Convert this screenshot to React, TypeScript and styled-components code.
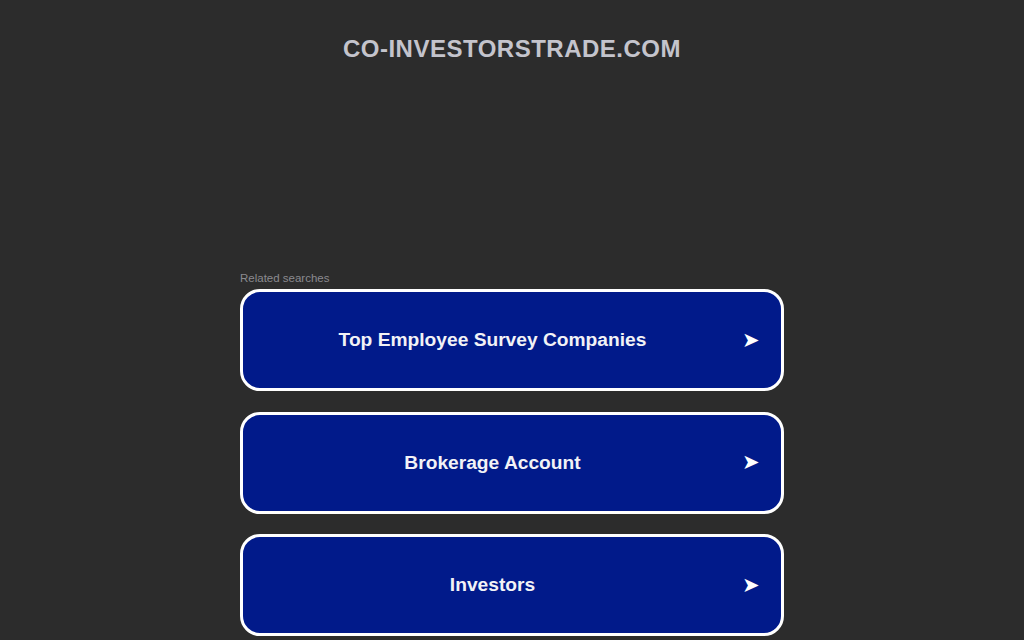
import React from "react";
import styled, { createGlobalStyle } from "styled-components";

const Global = createGlobalStyle`
  html, body { margin: 0; padding: 0; background: #2c2c2c; }
  body { font-family: "Liberation Sans", Arial, sans-serif; }
`;

const Page = styled.div`
  display: flex;
  flex-direction: column;
  align-items: center;
  min-height: 640px;
`;

const Domain = styled.h1`
  margin: 34px 0 0;
  font-size: 24px;
  font-weight: 700;
  line-height: 29px;
  color: #c4c4cc;
  letter-spacing: 0.5px;
`;

const Section = styled.div`
  width: 544px;
  margin-top: 208px;
  display: flex;
  flex-direction: column;
`;

const Label = styled.div`
  font-size: 11.5px;
  line-height: 14px;
  color: #8a8a8f;
  margin-bottom: 4px;
`;

const List = styled.div`
  display: flex;
  flex-direction: column;
  gap: 20.5px;
`;

const Card = styled.a`
  display: flex;
  align-items: center;
  height: 102px;
  box-sizing: border-box;
  border: 3px solid #ffffff;
  border-radius: 20px;
  background: #011a8a;
  color: #ffffff;
  text-decoration: none;
  cursor: pointer;
`;

const CardText = styled.span`
  flex: 1;
  text-align: center;
  font-size: 19.2px;
  font-weight: 700;
  color: #f2f2f6;
`;

const Arrow = styled.span`
  width: 19px;
  margin-right: 20px;
  font-size: 21px;
  line-height: 1;
  color: #ffffff;
  font-family: "DejaVu Sans", sans-serif;
`;

const items = ["Top Employee Survey Companies", "Brokerage Account", "Investors"];

export default function App() {
  return (
    <>
      <Global />
      <Page>
        <Domain>CO-INVESTORSTRADE.COM</Domain>
        <Section>
          <Label>Related searches</Label>
          <List>
            {items.map((t) => (
              <Card key={t}>
                <CardText>{t}</CardText>
                <Arrow>➤</Arrow>
              </Card>
            ))}
          </List>
        </Section>
      </Page>
    </>
  );
}
